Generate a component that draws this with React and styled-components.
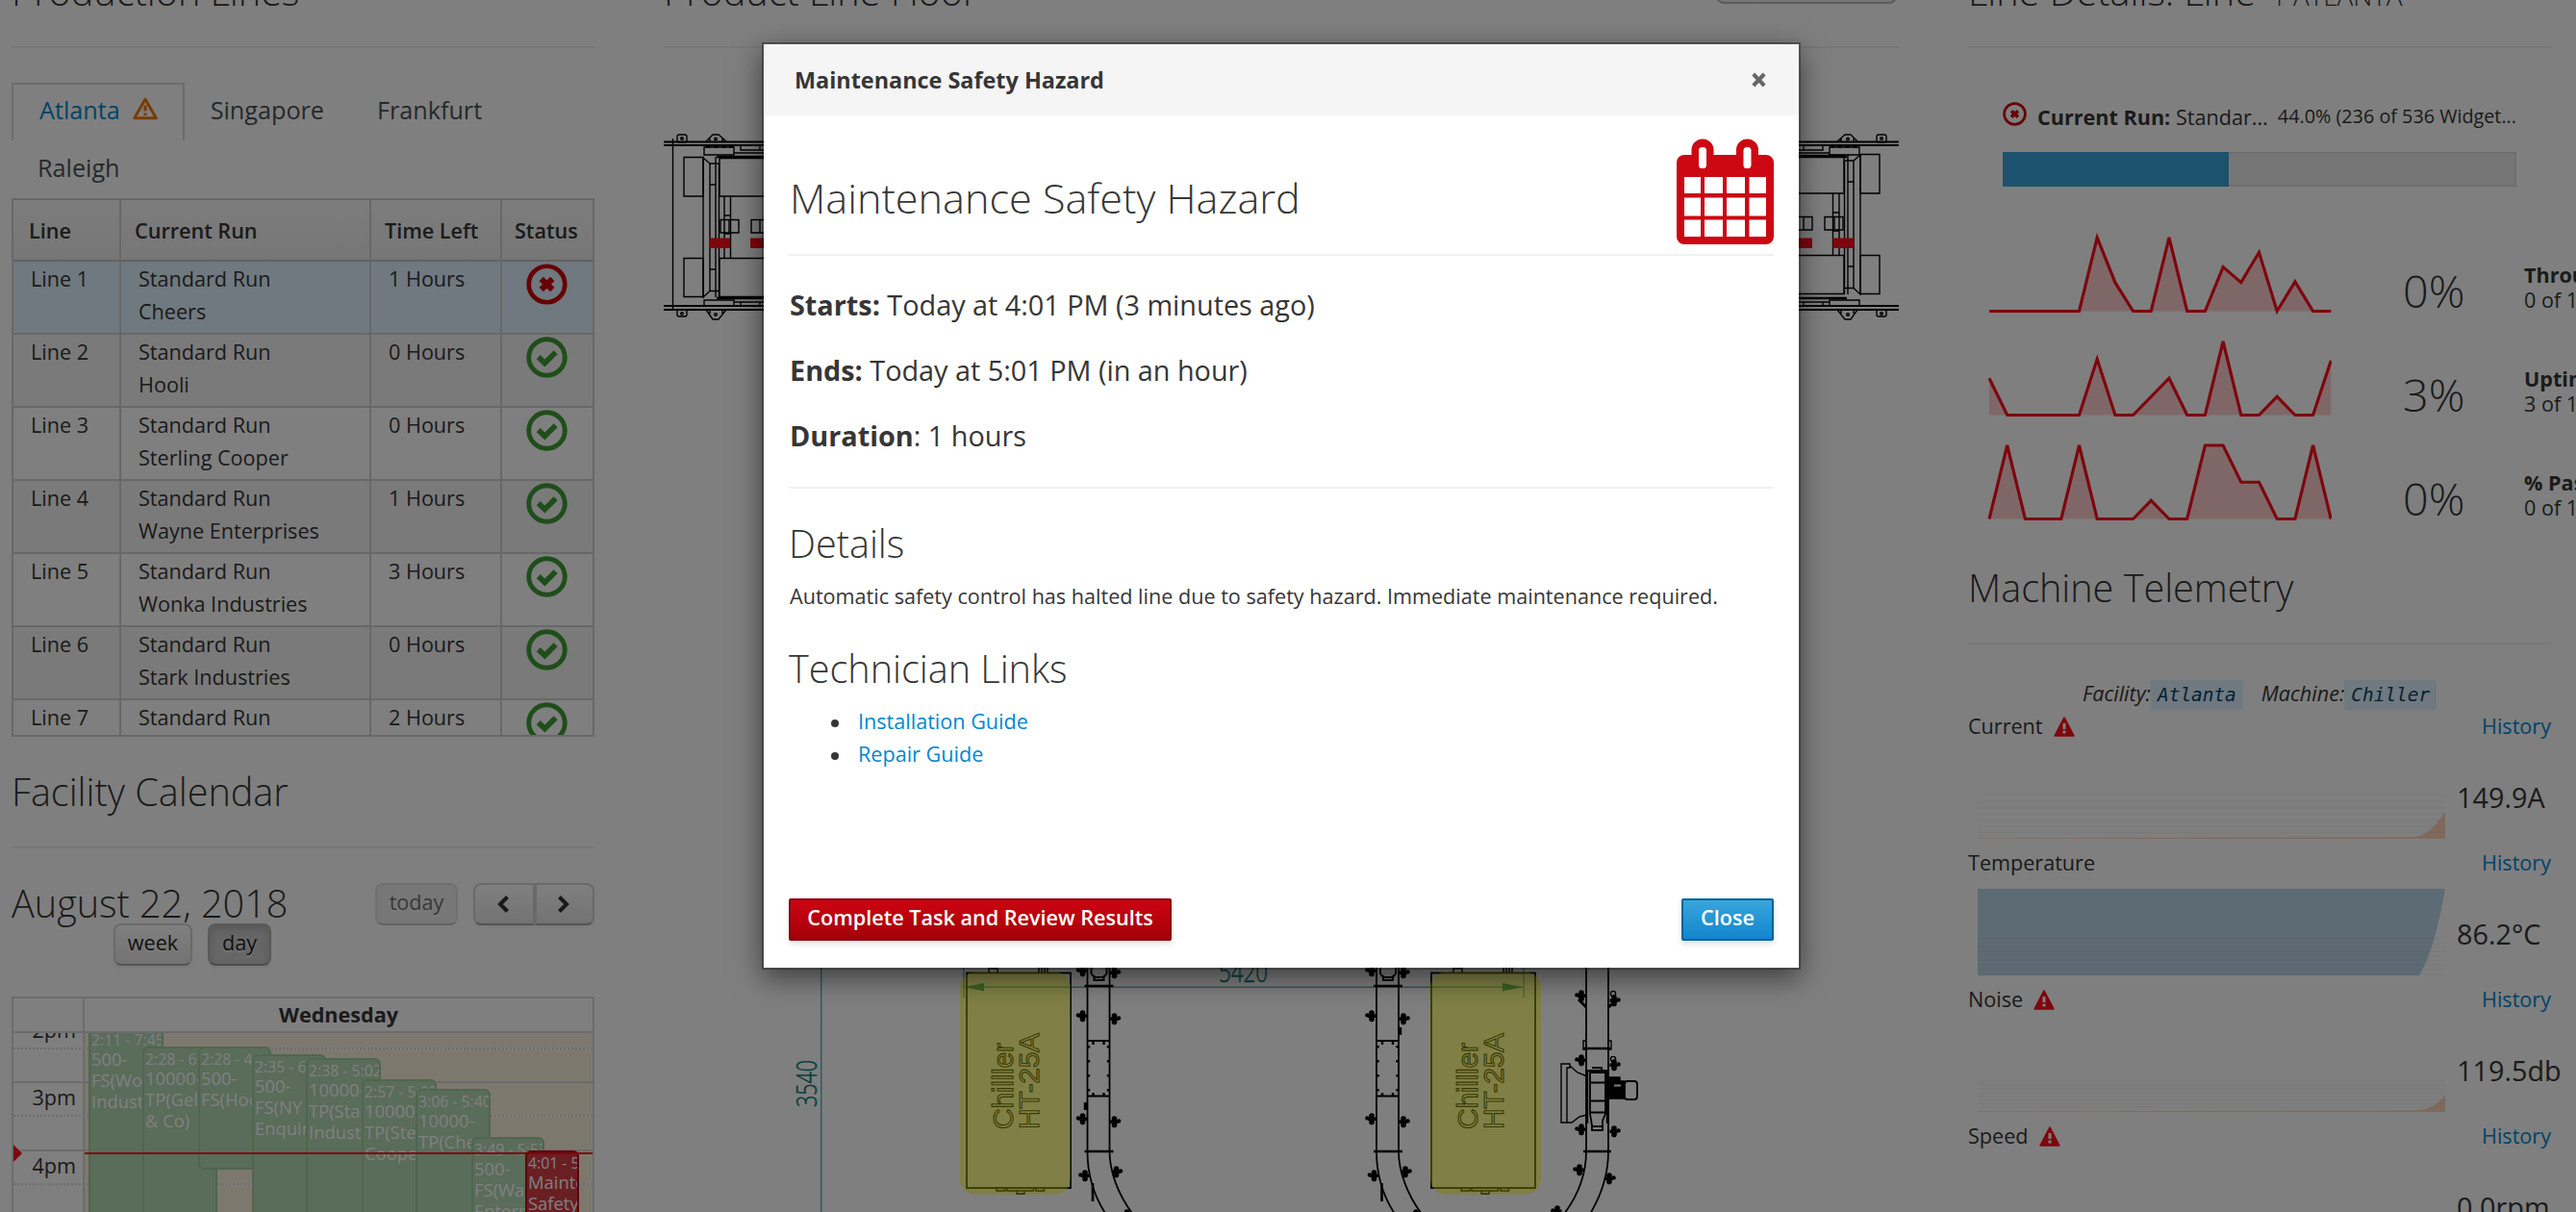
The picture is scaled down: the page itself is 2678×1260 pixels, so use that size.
import React from 'react';
import styled, { createGlobalStyle, css } from 'styled-components';

const GlobalStyle = createGlobalStyle`
  * { box-sizing: border-box; }
  body {
    margin: 0;
    background: #fff;
    color: #363636;
    font-family: "Open Sans", "Noto Sans", sans-serif;
    font-size: 21.6px;
    line-height: 34px;
  }
`;

const Viewport = styled.div`
  position: relative;
  width: 2678px;
  height: 1260px;
  overflow: hidden;
  white-space: nowrap;
`;

const Dashboard = styled.main`
  display: grid;
  grid-template-columns: 606px 1284px 632px;
  column-gap: 72px;
  padding-left: 12px;
  margin-top: -32px;
`;

const Column = styled.section`
  min-width: 0;
`;

const Heading = styled.h2`
  width: ${(p) => p.$width || 'auto'};
  height: 82px;
  margin: ${(p) => p.$top || 0}px 0 0;
  padding-top: 1px;
  border-bottom: 2px solid #f0f0f0;
  font-size: 39.6px;
  font-weight: 300;
  line-height: 44px;
  display: flex;
  align-items: baseline;
`;

const HeadingSub = styled.small`
  margin-left: 16px;
  font-size: 27.8px;
  line-height: 30px;
`;

/* ---------- icons ---------- */

const Svg = styled.svg`
  display: block;
  flex: none;
  overflow: visible;
`;

const ErrorCircle = ({ size }) => (
  <Svg width={size} height={size} viewBox="0 0 44 44" fill="none" stroke="#cc0008">
    <circle cx="22" cy="22" r="19.2" strokeWidth="4.8" />
    <path d="M16 16.4 L28 27.6 M28 16.4 L16 27.6" strokeWidth="6.4" />
  </Svg>
);

const OkCircle = ({ size }) => (
  <Svg width={size} height={size} viewBox="0 0 44 44" fill="none" stroke="#3f9c35">
    <circle cx="22" cy="22" r="19.2" strokeWidth="5" />
    <path d="M13 21.6 L19.8 28.2 L31.4 16.6" strokeWidth="5.8" />
  </Svg>
);

const WarningOutline = () => (
  <Svg width="26" height="24" viewBox="0 0 26 24">
    <path d="M13 2.2 L24.3 21.8 H1.7 Z" fill="none" stroke="#ec7a08" strokeWidth="3" strokeLinejoin="round" />
    <path d="M13 8.5 V14.6 M13 16.4 V19" stroke="#ec7a08" strokeWidth="3.2" />
  </Svg>
);

const WarningSolid = () => (
  <Svg width="22" height="21" viewBox="0 0 22 21">
    <path d="M11 1.2 L20.8 19.8 H1.2 Z" fill="#fc0d1b" stroke="#fc0d1b" strokeWidth="1.8" strokeLinejoin="round" />
    <path d="M11 7 V13 M11 14.6 V17.4" stroke="#fff" strokeWidth="3" />
  </Svg>
);

const CalendarIcon = () => (
  <Svg width="101" height="109" viewBox="0 0 101 109">
    <path
      fill="#cc0812"
      d="M8 16 H15.5 V11 A11.5 11.5 0 0 1 38.5 11 V16 H62 V11 A11.5 11.5 0 0 1 85 11 V16 H93 A8 8 0 0 1 101 24 V101 A8 8 0 0 1 93 109 H8 A8 8 0 0 1 0 101 V24 A8 8 0 0 1 8 16 Z"
    />
    <rect x="23" y="8" width="8" height="22" rx="3.6" fill="#fff" />
    <rect x="69.5" y="8" width="8" height="22" rx="3.6" fill="#fff" />
    {[39, 60.5, 83.5].map((y, r) =>
      [8, 29, 52, 75.5].map((x, c) => (
        <rect key={`${x}-${y}`} x={x} y={y} width={[17, 19, 19, 17.5][c]} height={[17, 19, 17.5][r]} fill="#fff" />
      ))
    )}
  </Svg>
);

/* ---------- tabs ---------- */

const Tabs = styled.nav`
  display: flex;
  flex-wrap: wrap;
  height: 120px;
  margin-top: 36px;
`;

const Tab = styled.a`
  display: flex;
  gap: 13px;
  height: 60px;
  padding: 11px 28px 0 27px;
  font-size: 25.2px;
  color: #4d5258;
  border: 0 solid #d8d8d8;
  ${(p) =>
    p.$active &&
    css`
      padding: 9px 26px 0 27px;
      border-width: 2px 2px 0;
      color: #0088ce;
    `}
  svg { margin-top: 4px; }
`;

/* ---------- line table ---------- */

const Table = styled.div`
  height: 560px;
  overflow: hidden;
  border: 2px solid #d1d1d1;
`;

const gridRow = css`
  display: grid;
  grid-template-columns: 112px 260px 136px 94px;
`;

const TableHead = styled.div`
  ${gridRow}
  height: 64px;
  line-height: 63px;
  font-weight: 600;
  background: linear-gradient(#fafafa, #ededed);
  border-bottom: 2px solid #c4c4c4;
`;

const HeadCell = styled.div`
  padding-left: 14px;
  border-right: 2px solid #d1d1d1;
  &:first-child { padding-left: 16px; }
  &:last-child { border-right: 0; padding-left: 13px; }
`;

const TableRow = styled.div`
  ${gridRow}
  height: 76px;
  border-bottom: 2px solid #d1d1d1;
  background: ${(p) => (p.$selected ? '#def3ff' : p.$striped ? '#f5f5f5' : '#fff')};
`;

const Cell = styled.div`
  padding: 1px 0 0 18px;
  border-right: 2px solid #d1d1d1;
  &:last-child {
    border-right: 0;
    padding: 2px 2px 0 0;
    display: flex;
    justify-content: center;
  }
`;

const lines = [
  ['Line 1', 'Cheers', '1 Hours'],
  ['Line 2', 'Hooli', '0 Hours'],
  ['Line 3', 'Sterling Cooper', '0 Hours'],
  ['Line 4', 'Wayne Enterprises', '1 Hours'],
  ['Line 5', 'Wonka Industries', '3 Hours'],
  ['Line 6', 'Stark Industries', '0 Hours'],
  ['Line 7', '', '2 Hours'],
];

/* ---------- calendar ---------- */

const Toolbar = styled.div`
  display: flex;
  height: 42px;
  margin-top: ${(p) => p.$top || 0}px;
  padding-left: ${(p) => p.$left || 0}px;
`;

const DateTitle = styled.h2`
  flex: 1;
  margin: -1px 0 0;
  font-size: 39.6px;
  font-weight: 300;
  line-height: 44px;
`;

const CalButton = styled.button`
  width: ${(p) => p.$width}px;
  height: 44px;
  margin-right: ${(p) => p.$gap || 0}px;
  padding: 0 0 5px;
  display: flex;
  align-items: center;
  justify-content: center;
  font: inherit;
  font-size: 21.6px;
  color: #222;
  border: 2px solid #d4d4d4;
  border-bottom-color: #a8a8a8;
  border-radius: ${(p) => p.$radius || '8px'};
  background: linear-gradient(#fff, #e6e6e6);
  text-shadow: 0 2px 2px rgba(255, 255, 255, 0.75);
  box-shadow: inset 0 2px 0 rgba(255, 255, 255, 0.2), 0 2px 4px rgba(0, 0, 0, 0.05);
  ${(p) => p.$disabled && css`opacity: 0.65; background: #e6e6e6; box-shadow: none;`}
  ${(p) =>
    p.$pressed &&
    css`
      background: #ccc;
      border-color: #b4b4b4;
      border-bottom-color: #999;
      box-shadow: inset 0 4px 8px rgba(0, 0, 0, 0.15), 0 2px 4px rgba(0, 0, 0, 0.05);
    `}
`;

const ChevronSvg = styled(Svg)`
  margin: 4px 2px 0 0;
`;

const Chevron = ({ dir }) => (
  <ChevronSvg width="14" height="18" viewBox="0 0 14 18">
    <path
      d={dir === 'left' ? 'M11.5 1.5 L4 9 L11.5 16.5' : 'M2.5 1.5 L10 9 L2.5 16.5'}
      fill="none"
      stroke="#333"
      strokeWidth="4"
    />
  </ChevronSvg>
);

const Calendar = styled.div`
  height: 240px;
  margin-top: 34px;
  overflow: hidden;
  border: 2px solid #d8d8d8;
`;

const CalHead = styled.div`
  display: grid;
  grid-template-columns: 74px 1fr;
  height: 36px;
  line-height: 34px;
  font-weight: 700;
  text-align: center;
  border-bottom: 2px solid #d8d8d8;
`;

const AxisBlank = styled.div`
  border-right: 2px solid #d8d8d8;
`;

const CalBody = styled.div`
  position: relative;
  height: 200px;
  overflow: hidden;
`;

const Slots = styled.div`
  margin-top: -20px;
`;

const Slot = styled.div`
  display: grid;
  grid-template-columns: 74px 1fr;
  height: 35.15px;
  border-top: 2px ${(p) => (p.$minor ? 'dotted' : 'solid')} #d8d8d8;
  line-height: 30px;
  text-align: right;
`;

const Axis = styled.div`
  padding-right: 7px;
  background: #fff;
  border-right: 2px solid #d8d8d8;
`;

const SlotBody = styled.div`
  background: #faf0dd;
  background-clip: padding-box;
`;

const Event = styled.div`
  position: absolute;
  left: ${(p) => p.$x - 14}px;
  top: ${(p) => p.$y - 1074}px;
  width: ${(p) => p.$w}px;
  height: ${(p) => p.$h || 240}px;
  padding-left: 1px;
  overflow: hidden;
  border: 2px solid ${(p) => (p.$red ? '#c40008' : '#9ccf9f')};
  border-radius: 6px;
  background: ${(p) => (p.$red ? '#d43f47' : '#b5d8b5')};
  color: #fff;
  font-size: 18.4px;
  line-height: 22px;
  white-space: pre;
`;

const EventTime = styled.div`
  font-size: 15.8px;
  height: 20px;
`;

const NowLine = styled.div`
  position: absolute;
  left: 74px;
  right: 0;
  top: 124px;
  height: 2px;
  background: #fc0d1b;
`;

const NowArrow = styled.div`
  position: absolute;
  left: 0;
  top: 116px;
  border: 9px solid transparent;
  border-left-color: #fc0d1b;
  border-right: 0;
`;

const events = [
  { x: 92, y: 1068, w: 78, t: '2:11 - 7:45', n: '500-\nFS(Wonka\nIndustries)' },
  { x: 148, y: 1088, w: 78, t: '2:28 - 6:10', n: '10000-\nTP(Gelato\n& Co)' },
  { x: 206, y: 1088, w: 76, h: 128, t: '2:28 - 4:11', n: '500-\nFS(Hooli)' },
  { x: 262, y: 1096, w: 77, t: '2:35 - 6:02', n: '500-\nFS(NY\nEnquirer)' },
  { x: 318, y: 1100, w: 78, t: '2:38 - 5:02', n: '10000-\nTP(Stark\nIndustries)' },
  { x: 376, y: 1122, w: 78, t: '2:57 - 5:02', n: '10000-\nTP(Sterling\nCooper)' },
  { x: 432, y: 1132, w: 78, t: '3:06 - 5:40', n: '10000-\nTP(Cheers)' },
  { x: 490, y: 1182, w: 76, t: '3:49 - 5:53', n: '500-\nFS(Wayne\nEnterprises)' },
  { x: 546, y: 1196, w: 56, t: '4:01 - 5:01', n: 'Maintenance\nSafety', red: true },
];

/* ---------- floor plan ---------- */

const FloorButton = styled.button`
  width: 188px;
  height: 44px;
  margin: -9px 2px 0 auto;
  align-self: flex-start;
  border: 2px solid #bbb;
  border-radius: 8px;
  background: linear-gradient(#fafafa, #ededed);
`;

const PlanSvg = styled(Svg)`
  overflow: hidden;
`;

const bolt = (x, y, flip) => (
  <g key={`${x}-${y}`} transform={`translate(${x} ${y}) scale(${flip ? -1 : 1} 1)`} stroke="none" fill="#000">
    <circle cx="1" cy="-3" r="2.8" />
    <circle cx="1" cy="3.4" r="2.8" />
    <circle cx="-3.6" cy="-0.6" r="2.2" />
    <rect x="-3" y="-1.6" width="8.5" height="3.6" />
  </g>
);

const EndFrame = () => (
  <g>
    <path d="M690 147.5 H800 M690 151 H800 M690 318 H800 M690 322 H800" strokeWidth="2" />
    <rect x="704" y="140" width="10" height="8" rx="2" />
    <rect x="704" y="322" width="10" height="7" rx="2" />
    <path d="M734 147 L741 140 H747 L755 147 M738 147 V144 M751 147 V144" />
    <path d="M734 322 L741 332 H747 L755 322 M738 322 V326 M751 322 V326" />
    <circle cx="709" cy="144" r="1.3" />
    <circle cx="709" cy="326" r="1.3" />
    <circle cx="744" cy="144.5" r="1.3" />
    <circle cx="744" cy="327" r="1.3" />
    <path d="M732 153 H763 V161 H732 Z M763 154 V159 H800 M770 151 V156 H800 M790 151 V156" />
    <path d="M732 312 H763 V318 H732 Z M763 314 H800 M770 318 V314 M790 318 V314" />
    <path d="M734 152 H762" strokeWidth="3" strokeDasharray="5 3" />
    <path d="M745 163 H800 M745 310 H800" strokeWidth="2.6" />
  </g>
);

const EndBody = () => (
  <g>
    <path d="M711 163.5 H731 V204 H711 Z M711 268.5 H731 V308.5 H711 Z" />
    <path d="M731 163 V310 M738 170 V303 M744 163 V309 M747.5 170 V309" />
    <path d="M731 164 L738 170 H747 M731 309 L738 302.5 H747 M738 192 H744 M738 280 H744" />
    <path d="M800 164.5 H748 V204 H800 M800 268.5 H748 V308.5 H800" />
    <path d="M753 204 V268 M759.5 204 V268 M753 224 H760 M753 243 H760" />
    <path d="M749 228.5 H768 V242 H749 Z M758 228.5 V242 M800 228.5 H781 V242 H800 M790 228.5 V242" />
  </g>
);

const Pipe = ({ x }) => (
  <g>
    <path d={`M${x} 1000 V1197 C${x} 1218 ${x + 6} 1242 ${x + 19} 1262 M${x + 23} 1000 V1197 C${x + 23} 1218 ${x + 32} 1242 ${x + 47} 1262`} strokeWidth="1.8" />
    <path d={`M${x - 3} 1025 H${x + 27} M${x - 3} 1197 H${x + 27}`} strokeWidth="2.4" />
    <path d={`M${x} 1082 H${x + 23} M${x} 1139.5 H${x + 23}`} strokeWidth="2" />
    <path d={`M${x + 1.5} 1083 V1139`} strokeWidth="2.4" strokeDasharray="2.4 12.6" strokeDashoffset="-4" />
    <path d={`M${x + 21.5} 1083 V1139`} strokeWidth="2.4" strokeDasharray="2.4 12.6" strokeDashoffset="-4" />
    <path d={`M${x + 6} 1083 V1086 M${x + 17} 1083 V1086 M${x + 6} 1136 V1139 M${x + 17} 1136 V1139`} strokeWidth="2.4" />
    <path d={`M${x + 4} 1000 V1012 L${x + 7} 1016 H${x + 17} L${x + 20} 1012 V1000 M${x + 7} 1014 V1019 H${x + 17} V1014`} strokeWidth="2" />
    {bolt(x - 6, 1009)}
    {bolt(x + 29, 1011, true)}
    {bolt(x - 6, 1056)}
    {bolt(x + 29, 1059, true)}
    {bolt(x - 6, 1163)}
    {bolt(x + 29, 1166, true)}
    {bolt(x - 3.5, 1222)}
    {bolt(x + 31, 1218, true)}
    {bolt(x + 40, 1263)}
    <path d={`M${x + 5.5} 1230 V1249`} strokeWidth="2.6" />
  </g>
);

const ChillerLabel = styled.text`
  font-family: "Liberation Sans", Arial, sans-serif;
  font-size: 30px;
  fill: none;
  stroke: #000;
  stroke-width: 1.1px;
`;

const DimText = styled.text`
  font-family: "Open Sans", sans-serif;
  font-size: 30px;
  font-weight: 300;
  fill: #0a7c7c;
  stroke: #0a7c7c;
  stroke-width: 0.5px;
`;

const Chiller = ({ x, zone }) => (
  <g>
    <path d={`M${x + 23} 1011 V1000 M${x + 32} 1011 V1000 M${x + 23} 1007 H${x + 32} M${x + 75} 1011 V1000 M${x + 78} 1011 V1000 M${x + 81} 1011 V1000 M${x + 84} 1011 V1000`} />
    <rect x={x} y="1011.5" width="108" height="223.5" strokeWidth="1.8" />
    <path d={`M${x + 31} 1235 V1238 H${x + 40} V1235 M${x + 42} 1235 V1238 H${x + 69.5} V1235 M${x + 72} 1235 V1238 H${x + 80.5} V1235 M${x + 52} 1238 V1241 H${x + 60} V1238`} />
    <ChillerLabel transform={`translate(${x + 48} 1174) rotate(-90)`} textLength="90">Chilller</ChillerLabel>
    <ChillerLabel transform={`translate(${x + 75} 1174) rotate(-90)`} textLength="100">HT-25A</ChillerLabel>
    <rect x={zone} y="1010.5" width="115" height="231" rx="16" fill="#ffff00" fillOpacity="0.45" stroke="none" />
  </g>
);

const FloorPlan = () => (
  <PlanSvg width="1284" height="1210" viewBox="690 50 1284 1210" fill="none" stroke="#000" strokeWidth="1.4">
    <EndFrame />
    <EndBody />
    <path d="M699.5 144 V323" />
    <g transform="translate(2665 0) scale(-1 1)">
      <EndFrame />
      <g transform="translate(0 -3)">
        <EndBody />
      </g>
    </g>
    <g fill="#fc0d1b" stroke="none">
      <rect x="737" y="247.5" width="22" height="10.5" />
      <rect x="780" y="247.5" width="22" height="10.5" />
      <rect x="1862" y="247.5" width="22" height="10.5" />
      <rect x="1905.5" y="247.5" width="22" height="10.5" />
    </g>
    <g stroke="#5eb0ac" strokeWidth="1.4">
      <path d="M853.7 900 V1260 M1002 1000 V1037 M1584 1000 V1037 M1002 1026.3 H1584" />
      <path d="M1003 1026.3 L1023 1022 V1030.5 Z M1583 1026.3 L1562 1022 V1030.5 Z" fill="#0a8a7c" stroke="none" />
    </g>
    <DimText transform="translate(848.5 1151) rotate(-90)" textLength="49" lengthAdjust="spacingAndGlyphs">3540</DimText>
    <DimText x="1267" y="1020.5" textLength="51" lengthAdjust="spacingAndGlyphs">5420</DimText>
    <Pipe x={1130.5} />
    <Pipe x={1431} />
    <path d="M1128.5 1146 V1154 M1455.5 1068 V1076" strokeWidth="3.4" />
    <Chiller x={1005} zone={998} />
    <Chiller x={1488} zone={1487} />
    <g>
      <path d="M1649 1000 V1197 C1649 1220 1641 1242 1626 1262 M1672 1000 V1197 C1672 1220 1665 1242 1653 1262" strokeWidth="1.8" />
      <path d="M1646 1090 H1675 M1646 1197 H1675" strokeWidth="2.4" />
      <path d="M1646 1082 V1091 H1649 V1082 Z M1672 1082 V1091 H1675 V1082 Z" />
      <path d="M1623 1106 H1632 V1110 H1629 V1167 H1623 Z M1632 1108 L1640 1115 L1650 1119 M1629 1167 H1634 L1642 1161 L1650 1159" />
      <path d="M1650 1113 V1168 M1671 1113 V1168" strokeWidth="2.4" />
      <path d="M1650 1113 H1671 M1653 1115 H1669 V1158 L1666 1165 V1175 H1655 V1170 L1653 1158 Z M1653 1125.5 H1669 M1653 1144.5 H1669 M1653 1156.5 H1669 M1655 1110 H1665 V1113 M1655 1171 H1666" strokeWidth="1.8" />
      <rect x="1689" y="1124" width="13" height="19" rx="3" strokeWidth="1.8" />
      <path d="M1673 1120 H1684 V1124 H1689 V1142 H1673 Z" fill="#000" />
      <path d="M1678 1128.5 H1685" stroke="#fff" strokeWidth="2" />
      {bolt(1643, 1035)}
      {bolt(1679, 1040, true)}
      {bolt(1643, 1102)}
      {bolt(1679, 1107, true)}
      {bolt(1643, 1174)}
      {bolt(1679, 1176, true)}
      {bolt(1641, 1216)}
      {bolt(1674, 1225, true)}
      {bolt(1618, 1259)}
      <path d="M1641 1039 L1649 1047 M1681 1040 L1672 1047" strokeWidth="3" />
      <circle cx="1677" cy="1033" r="2.6" />
      <circle cx="1677" cy="1101" r="2.6" />
    </g>
  </PlanSvg>
);

/* ---------- line details ---------- */

const RunBlock = styled.div`
  width: 606px;
  padding: 0 36px;
  margin-top: 50px;
`;

const RunRow = styled.div`
  display: flex;
  height: 58px;
`;

const RunIcon = styled.span`
  width: 36px;
  padding-top: 6px;
`;

const RunName = styled.span`
  width: 250px;
  padding-top: 5px;
  line-height: 34px;
`;

const RunCount = styled.span`
  font-size: 19.8px;
  line-height: 34px;
  padding-top: 4px;
`;

const Track = styled.div`
  height: 36px;
  background: #ededed;
  box-shadow: inset 0 0 2px 1px rgba(0, 0, 0, 0.12);
`;

const Fill = styled.div`
  height: 36px;
  background: #39a5dc;
`;

const KpiList = styled.div`
  margin: 42px 0 0 20px;
`;

const KpiRow = styled.div`
  display: grid;
  grid-template-columns: 432px 126px 1fr;
  height: 108px;
`;

const KpiPercent = styled.div`
  padding-top: 34px;
  font-size: 46.8px;
  font-weight: 300;
  line-height: 64px;
`;

const KpiText = styled.div`
  padding-top: 37px;
  line-height: 26px;
`;

const kpis = [
  { pct: '0%', name: 'Throughput', sub: '0 of 1', data: [0, 0, 0, 0, 0, 0, 1, 0.39, 0, 0, 1, 0, 0, 0.6, 0.39, 0.8, 0, 0.4, 0, 0] },
  { pct: '3%', name: 'Uptime', sub: '3 of 1', data: [0.5, 0, 0, 0, 0, 0, 0.76, 0, 0, 0.25, 0.5, 0, 0, 1, 0, 0, 0.25, 0, 0, 0.74] },
  { pct: '0%', name: '% Pass', sub: '0 of 1', data: [0, 1, 0, 0, 0, 1, 0, 0, 0, 0.25, 0, 0, 1, 1, 0.5, 0.5, 0, 0, 1, 0] },
];

const Sparkline = ({ data }) => {
  const pts = data.map((v, i) => `${2 + i * 18.7},${87.5 - v * 76.5}`).join(' L');
  return (
    <PlanSvg width="358" height="108" viewBox="0 0 358 108">
      <path d={`M${pts} L357.3,87.5 L2,87.5 Z`} fill="#fc0d1b" fillOpacity="0.2" />
      <path d={`M${pts}`} fill="none" stroke="#fc0d1b" strokeWidth="3.2" />
    </PlanSvg>
  );
};

/* ---------- telemetry ---------- */

const Source = styled.div`
  display: flex;
  justify-content: center;
  gap: 19px;
  width: 606px;
  height: 34px;
  margin-top: 34px;
  font-style: italic;
`;

const Code = styled.code`
  padding: 4px 7px;
  border-radius: 2px;
  background: #def3ff;
  color: #004368;
  font-family: "DejaVu Sans Mono", monospace;
  font-size: 19.4px;
`;

const Metric = styled.div`
  height: 142px;
`;

const MetricHead = styled.div`
  display: flex;
  gap: 11px;
  width: 606px;
  height: 34px;
  svg { margin-top: 7px; }
`;

const Link = styled.a`
  color: #0088ce;
`;

const HistoryLink = styled(Link)`
  margin-left: auto;
`;

const MetricBody = styled.div`
  display: flex;
  padding: 10px 0 0 10px;
`;

const MetricValue = styled.div`
  padding-top: 27px;
  margin-left: 12px;
  font-size: 28.8px;
  line-height: 40px;
`;

const metrics = [
  { name: 'Current', value: '149.9A', alert: true, from: 45, step: 6.4, count: 7, area: 'M0 89.4 L452 88.2 C466 87.5 474 79 486 62 V90 H0 Z', fill: '#ffd4ba' },
  { name: 'Temperature', value: '86.2°C', from: 51, step: 4.7, count: 9, area: 'M0 0 H486 C480 34 472 68 459 90 H0 Z', fill: '#bbd7e8' },
  { name: 'Noise', value: '119.5db', alert: true, from: 58, step: 3.9, count: 8, area: 'M0 89.4 L456 88.4 C468 88 476 84 486 73 V90 H0 Z', fill: '#ffd4ba' },
  { name: 'Speed', value: '0.0rpm', alert: true, from: 120, step: 6, count: 0, area: '', fill: 'none' },
];

const MetricChart = ({ m }) => (
  <Svg width="486" height="90" viewBox="0 0 486 90">
    <path d={m.area} fill={m.fill} />
    {Array.from({ length: m.count }, (_, i) => (
      <path key={i} d={`M0 ${m.from + i * m.step} H486`} stroke="#000" strokeOpacity="0.035" strokeWidth="1.6" />
    ))}
  </Svg>
);

/* ---------- dialog ---------- */

const Backdrop = styled.div`
  position: absolute;
  inset: 0;
  padding: 44px 0 0 792px;
  background: rgba(0, 0, 0, 0.5);
`;

const Dialog = styled.div`
  display: flex;
  flex-direction: column;
  width: 1080px;
  height: 964px;
  border: 2px solid rgba(0, 0, 0, 0.35);
  background: #fff;
  background-clip: padding-box;
  box-shadow: 0 9px 27px rgba(0, 0, 0, 0.5);
`;

const DialogHeader = styled.header`
  display: flex;
  align-items: center;
  justify-content: space-between;
  height: 74px;
  padding: 0 34px 0 32px;
  background: #f5f5f5;
  font-size: 23.4px;
  font-weight: 700;
`;

const DialogBody = styled.div`
  flex: 1;
  display: flex;
  flex-direction: column;
  padding: 0 26px 28px;
`;

const HazardHead = styled.div`
  display: flex;
  justify-content: space-between;
  height: 146px;
  padding-top: 25px;
  border-bottom: 2px solid #f0f0f0;
`;

const HazardTitle = styled.h1`
  margin: 37px 0 0 1px;
  font-size: 43.2px;
  font-weight: 300;
  line-height: 48px;
`;

const Facts = styled.div`
  padding: 17px 0 19px 1px;
  border-bottom: 2px solid #f0f0f0;
  font-size: 28.8px;
  line-height: 68px;
`;

const SubHeading = styled.h2`
  margin: ${(p) => p.$top}px 0 16px;
  font-size: 39.6px;
  font-weight: 300;
  line-height: 44px;
`;

const Description = styled.p`
  margin: 0 0 0 1px;
`;

const LinkItem = styled.div`
  display: flex;
  align-items: center;
  padding-left: 44px;
  &::before {
    content: '';
    width: 8px;
    height: 8px;
    margin: 4px 20px 0 0;
    border-radius: 50%;
    background: #363636;
  }
`;

const DialogFooter = styled.footer`
  display: flex;
  justify-content: space-between;
  margin-top: auto;
`;

const ActionButton = styled.button`
  height: 44px;
  width: ${(p) => p.$width}px;
  padding: 0 0 5px;
  font: inherit;
  font-size: 21.6px;
  font-weight: 600;
  line-height: 34px;
  color: #fff;
  border: 2px solid ${(p) => (p.$danger ? '#8b0008' : '#00659c')};
  border-radius: 2px;
  background: ${(p) => (p.$danger ? 'linear-gradient(#cc0412, #a30008)' : 'linear-gradient(#39a5dc, #1286cd)')};
  box-shadow: 0 4px 6px rgba(3, 3, 3, 0.1);
`;

export default function App() {
  return (
    <Viewport>
      <GlobalStyle />
      <Dashboard>
        <Column>
          <Heading>Production Lines</Heading>
          <Tabs>
            <Tab $active>Atlanta <WarningOutline /></Tab>
            <Tab>Singapore</Tab>
            <Tab>Frankfurt</Tab>
            <Tab>Raleigh</Tab>
          </Tabs>
          <Table>
            <TableHead>
              <HeadCell>Line</HeadCell>
              <HeadCell>Current Run</HeadCell>
              <HeadCell>Time Left</HeadCell>
              <HeadCell>Status</HeadCell>
            </TableHead>
            {lines.map(([name, run, left], i) => (
              <TableRow key={name} $selected={i === 0} $striped={i % 2 === 1}>
                <Cell>{name}</Cell>
                <Cell>Standard Run<br />{run}</Cell>
                <Cell>{left}</Cell>
                <Cell>{i === 0 ? <ErrorCircle size={43} /> : <OkCircle size={43} />}</Cell>
              </TableRow>
            ))}
          </Table>
          <Heading $top={34}>Facility Calendar</Heading>
          <Toolbar $top={36}>
            <DateTitle>August 22, 2018</DateTitle>
            <CalButton $width={86} $gap={16} $disabled>today</CalButton>
            <CalButton $width={64} $radius="8px 0 0 8px"><Chevron dir="left" /></CalButton>
            <CalButton $width={62} $radius="0 8px 8px 0"><Chevron dir="right" /></CalButton>
          </Toolbar>
          <Toolbar $left={106}>
            <CalButton $width={82} $gap={16}>week</CalButton>
            <CalButton $width={66} $pressed>day</CalButton>
          </Toolbar>
          <Calendar>
            <CalHead>
              <AxisBlank />
              <div>Wednesday</div>
            </CalHead>
            <CalBody>
              <Slots>
                {['2pm', '', '3pm', '', '4pm', '', '5pm'].map((label, i) => (
                  <Slot key={i} $minor={i % 2 === 1}>
                    <Axis>{label}</Axis>
                    <SlotBody />
                  </Slot>
                ))}
              </Slots>
              {events.map((e) => (
                <Event key={e.x} $x={e.x} $y={e.y} $w={e.w} $h={e.h} $red={e.red}>
                  <EventTime>{e.t}</EventTime>
                  {e.n}
                </Event>
              ))}
              <NowLine />
              <NowArrow />
            </CalBody>
          </Calendar>
        </Column>

        <Column>
          <Heading>Product Line Floor<FloorButton aria-label="Floor view" /></Heading>
          <FloorPlan />
        </Column>

        <Column>
          <Heading $width="606px">Line Details: Line<HeadingSub>1 ATLANTA</HeadingSub></Heading>
          <RunBlock>
            <RunRow>
              <RunIcon><ErrorCircle size={25} /></RunIcon>
              <RunName><b>Current Run:</b> Standar...</RunName>
              <RunCount>44.0% (236 of 536 Widget...</RunCount>
            </RunRow>
            <Track><Fill style={{ width: `${(236 / 536) * 100}%` }} /></Track>
          </RunBlock>
          <KpiList>
            {kpis.map((k) => (
              <KpiRow key={k.name}>
                <Sparkline data={k.data} />
                <KpiPercent>{k.pct}</KpiPercent>
                <KpiText><b>{k.name}</b><br />{k.sub}</KpiText>
              </KpiRow>
            ))}
          </KpiList>
          <Heading $top={28} $width="606px">Machine Telemetry</Heading>
          <Source>
            <span>Facility:<Code>Atlanta</Code></span>
            <span>Machine:<Code>Chiller</Code></span>
          </Source>
          {metrics.map((m) => (
            <Metric key={m.name}>
              <MetricHead>
                {m.name}
                {m.alert && <WarningSolid />}
                <HistoryLink>History</HistoryLink>
              </MetricHead>
              <MetricBody>
                <MetricChart m={m} />
                <MetricValue>{m.value}</MetricValue>
              </MetricBody>
            </Metric>
          ))}
        </Column>
      </Dashboard>

      <Backdrop>
        <Dialog role="dialog">
          <DialogHeader>
            Maintenance Safety Hazard
            <Svg width="15" height="14" viewBox="0 0 15 14">
              <path d="M1.8 1 L13.2 13 M13.2 1 L1.8 13" stroke="#666" strokeWidth="4" />
            </Svg>
          </DialogHeader>
          <DialogBody>
            <HazardHead>
              <HazardTitle>Maintenance Safety Hazard</HazardTitle>
              <CalendarIcon />
            </HazardHead>
            <Facts>
              <div><b>Starts:</b> Today at 4:01 PM (3 minutes ago)</div>
              <div><b>Ends:</b> Today at 5:01 PM (in an hour)</div>
              <div><b>Duration</b>: 1 hours</div>
            </Facts>
            <SubHeading $top={35}>Details</SubHeading>
            <Description>Automatic safety control has halted line due to safety hazard. Immediate maintenance required.</Description>
            <SubHeading $top={36}>Technician Links</SubHeading>
            <LinkItem><Link>Installation Guide</Link></LinkItem>
            <LinkItem><Link>Repair Guide</Link></LinkItem>
            <DialogFooter>
              <ActionButton $width={398} $danger>Complete Task and Review Results</ActionButton>
              <ActionButton $width={96}>Close</ActionButton>
            </DialogFooter>
          </DialogBody>
        </Dialog>
      </Backdrop>
    </Viewport>
  );
}
